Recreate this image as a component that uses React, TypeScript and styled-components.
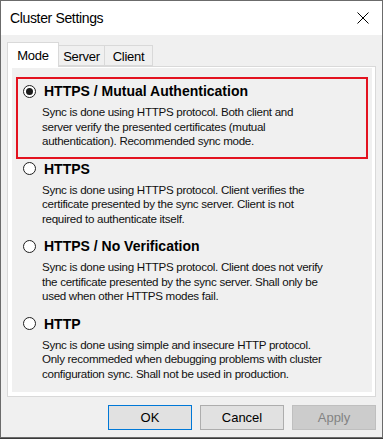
import React from 'react';
import styled, { createGlobalStyle } from 'styled-components';

const GlobalStyle = createGlobalStyle`
  html, body {
    margin: 0;
    padding: 0;
    background: #3a3a3a;
  }
  body {
    font-family: 'Liberation Sans', Arial, sans-serif;
  }
`;

const Window = styled.div`
  width: 383px;
  height: 438px;
  box-sizing: border-box;
  border: 1px solid #6b6b6b;
  background: #f0f0f0;
  display: flex;
  flex-direction: column;
  color: #000;
`;

const TitleBar = styled.div`
  height: 34px;
  background: #ffffff;
  display: flex;
  align-items: center;
  justify-content: space-between;
  padding: 0 12px 0 9px;
  flex-shrink: 0;
`;

const Title = styled.span`
  font-size: 14px;
  letter-spacing: -0.35px;
`;

const CloseButton = styled.button`
  border: none;
  background: transparent;
  padding: 0;
  width: 14px;
  height: 14px;
  display: flex;
  align-items: center;
  justify-content: center;
  cursor: pointer;
`;

const Body = styled.div`
  flex: 1;
  display: flex;
  flex-direction: column;
  padding: 7px 6px 7px 6px;
`;

const TabRow = styled.div`
  display: flex;
  align-items: flex-end;
  height: 24px;
  position: relative;
  z-index: 1;
`;

const Tab = styled.div<{ $active?: boolean; $width: number }>`
  box-sizing: border-box;
  width: ${(p) => p.$width}px;
  height: ${(p) => (p.$active ? '25px' : '21px')};
  margin-bottom: ${(p) => (p.$active ? '-1px' : '0')};
  padding-top: ${(p) => (p.$active ? '0' : '1px')};
  background: ${(p) => (p.$active ? '#ffffff' : '#f0f0f0')};
  border: 1px solid #d9d9d9;
  border-bottom: ${(p) => (p.$active ? 'none' : '1px solid #d9d9d9')};
  margin-left: ${(p) => (p.$active ? '0' : '-1px')};
  font-size: 13px;
  letter-spacing: -0.3px;
  display: flex;
  align-items: center;
  justify-content: center;
`;

const Panel = styled.div`
  flex: 1;
  border: 1px solid #d9d9d9;
  background: #ffffff;
  padding: 1px 3px 4px 4px;
  display: flex;
`;

const PanelInner = styled.div`
  flex: 1;
  background: #f0f0f0;
  padding: 11px 6px 0 6px;
  display: flex;
  flex-direction: column;
`;

const Option = styled.div<{ $selected?: boolean }>`
  padding: 3px 0 8px 5px;
  height: 77.5px;
  box-sizing: border-box;
  outline: ${(p) => (p.$selected ? '2px solid #e3121f' : 'none')};
`;

const OptionHead = styled.div`
  display: flex;
  align-items: center;
  height: 18px;
  gap: 8px;
`;

const Radio = styled.span<{ $checked?: boolean }>`
  box-sizing: border-box;
  width: 13px;
  height: 13px;
  border-radius: 50%;
  border: 1px solid #1f1f1f;
  background: #ffffff;
  display: flex;
  align-items: center;
  justify-content: center;
  flex-shrink: 0;

  &::after {
    content: '';
    width: 7px;
    height: 7px;
    border-radius: 50%;
    background: ${(p) => (p.$checked ? '#1a1a1a' : 'transparent')};
  }
`;

const OptionTitle = styled.span`
  font-size: 14px;
  font-weight: bold;
`;

const OptionDesc = styled.p`
  margin: 5px 0 0 19px;
  font-size: 11.6px;
  letter-spacing: -0.3px;
  line-height: 14.5px;
  color: #111;
`;

const ButtonRow = styled.div`
  display: flex;
  justify-content: flex-end;
  gap: 8px;
  margin-top: 8px;
`;

const Button = styled.button<{ $primary?: boolean }>`
  width: 84px;
  height: 25px;
  box-sizing: border-box;
  font-family: inherit;
  font-size: 13px;
  color: #000;
  background: #e1e1e1;
  border: 1px solid ${(p) => (p.$primary ? '#0078d7' : '#adadad')};
  padding: 0;

  &:disabled {
    background: #cccccc;
    border-color: #bfbfbf;
    color: #838383;
  }
`;

const tabs = [
  { label: 'Mode', width: 52 },
  { label: 'Server', width: 47 },
  { label: 'Client', width: 49 },
];

const options = [
  {
    title: 'HTTPS / Mutual Authentication',
    desc: [
      'Sync is done using HTTPS protocol. Both client and',
      'server verify the presented certificates (mutual',
      'authentication). Recommended sync mode.',
    ],
  },
  {
    title: 'HTTPS',
    desc: [
      'Sync is done using HTTPS protocol. Client verifies the',
      'certificate presented by the sync server. Client is not',
      'required to authenticate itself.',
    ],
  },
  {
    title: 'HTTPS / No Verification',
    desc: [
      'Sync is done using HTTPS protocol. Client does not verify',
      'the certificate presented by the sync server. Shall only be',
      'used when other HTTPS modes fail.',
    ],
  },
  {
    title: 'HTTP',
    desc: [
      'Sync is done using simple and insecure HTTP protocol.',
      'Only recommeded when debugging problems with cluster',
      'configuration sync. Shall not be used in production.',
    ],
  },
];

export default function App() {
  const selected = 0;
  const activeTab = 0;
  return (
    <>
      <GlobalStyle />
      <Window>
        <TitleBar>
          <Title>Cluster Settings</Title>
          <CloseButton aria-label="Close">
            <svg width="12" height="12" viewBox="0 0 12 12">
              <path d="M0.5 0.5 L11.5 11.5 M11.5 0.5 L0.5 11.5" stroke="#000" strokeWidth="1" />
            </svg>
          </CloseButton>
        </TitleBar>
        <Body>
          <TabRow>
            {tabs.map((t, i) => (
              <Tab key={t.label} $active={i === activeTab} $width={t.width}>
                {t.label}
              </Tab>
            ))}
          </TabRow>
          <Panel>
            <PanelInner>
              {options.map((o, i) => (
                <Option key={o.title} $selected={i === selected}>
                  <OptionHead>
                    <Radio $checked={i === selected} />
                    <OptionTitle>{o.title}</OptionTitle>
                  </OptionHead>
                  <OptionDesc>
                    {o.desc.map((line) => (
                      <React.Fragment key={line}>
                        {line}
                        <br />
                      </React.Fragment>
                    ))}
                  </OptionDesc>
                </Option>
              ))}
            </PanelInner>
          </Panel>
          <ButtonRow>
            <Button $primary>OK</Button>
            <Button>Cancel</Button>
            <Button disabled>Apply</Button>
          </ButtonRow>
        </Body>
      </Window>
    </>
  );
}
